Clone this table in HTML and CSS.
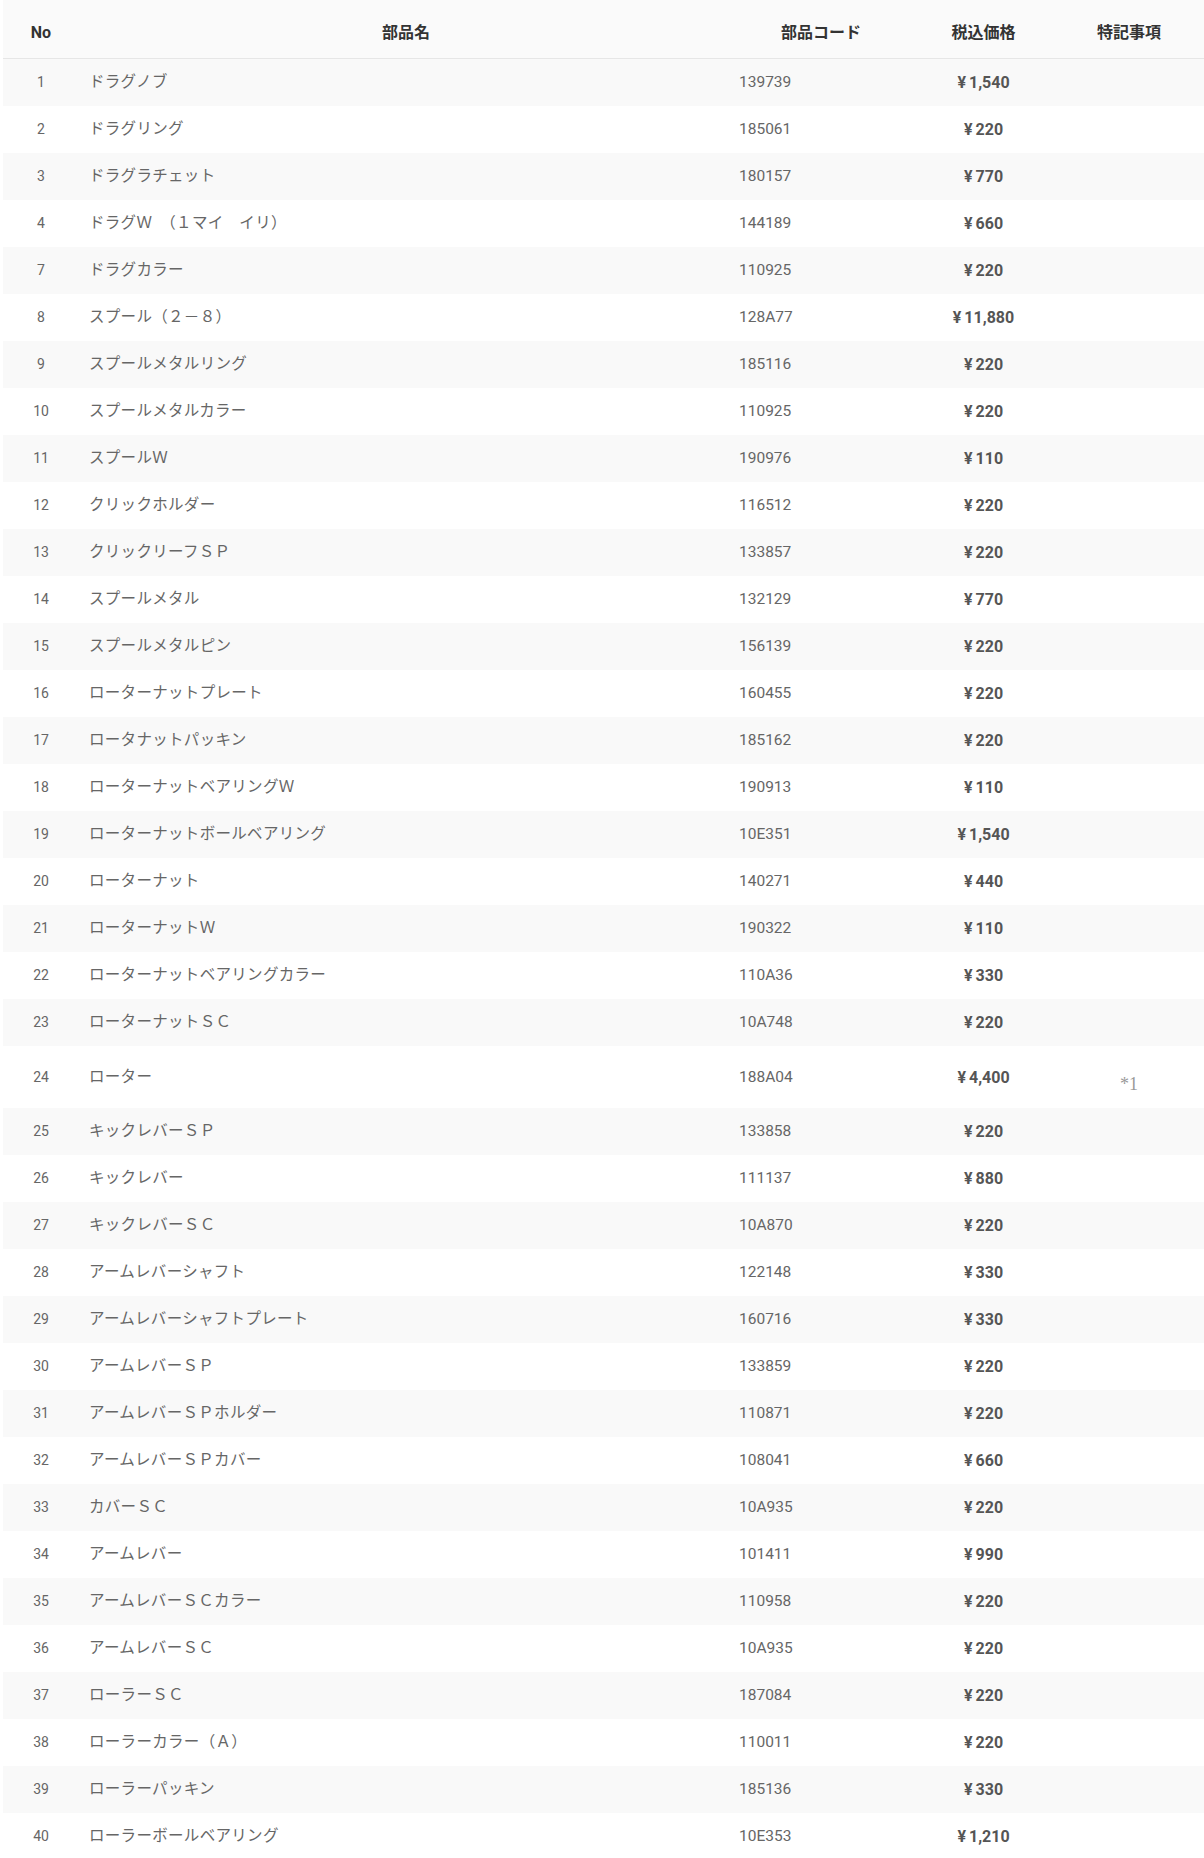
FILE: index.html
```html
<!DOCTYPE html>
<html lang="ja">
<head>
    <meta charset="UTF-8">
    <meta name="viewport" content="width=device-width, initial-scale=1.0">
    <title>部品一覧</title>
    <link rel="stylesheet" href="styles.css">
</head>
<body>
    <div class="parts-wrap">
        <table class="parts-table">
            <colgroup>
                <col class="col-no">
                <col class="col-name">
                <col class="col-code">
                <col class="col-price">
                <col class="col-note">
            </colgroup>
            <thead>
                <tr>
                    <th>No</th>
                    <th class="th-name">部品名</th>
                    <th>部品コード</th>
                    <th>税込価格</th>
                    <th>特記事項</th>
                </tr>
            </thead>
            <tbody>
                <tr><td class="no">1</td><td class="name">ドラグノブ</td><td class="code">139739</td><td class="price"><span class="yen">¥</span>1,540</td><td class="note"></td></tr>
                <tr><td class="no">2</td><td class="name">ドラグリング</td><td class="code">185061</td><td class="price"><span class="yen">¥</span>220</td><td class="note"></td></tr>
                <tr><td class="no">3</td><td class="name">ドラグラチェット</td><td class="code">180157</td><td class="price"><span class="yen">¥</span>770</td><td class="note"></td></tr>
                <tr><td class="no">4</td><td class="name">ドラグＷ　（１マイ　イリ）</td><td class="code">144189</td><td class="price"><span class="yen">¥</span>660</td><td class="note"></td></tr>
                <tr><td class="no">7</td><td class="name">ドラグカラー</td><td class="code">110925</td><td class="price"><span class="yen">¥</span>220</td><td class="note"></td></tr>
                <tr><td class="no">8</td><td class="name">スプール（２－８）</td><td class="code">128A77</td><td class="price"><span class="yen">¥</span>11,880</td><td class="note"></td></tr>
                <tr><td class="no">9</td><td class="name">スプールメタルリング</td><td class="code">185116</td><td class="price"><span class="yen">¥</span>220</td><td class="note"></td></tr>
                <tr><td class="no">10</td><td class="name">スプールメタルカラー</td><td class="code">110925</td><td class="price"><span class="yen">¥</span>220</td><td class="note"></td></tr>
                <tr><td class="no">11</td><td class="name">スプールＷ</td><td class="code">190976</td><td class="price"><span class="yen">¥</span>110</td><td class="note"></td></tr>
                <tr><td class="no">12</td><td class="name">クリックホルダー</td><td class="code">116512</td><td class="price"><span class="yen">¥</span>220</td><td class="note"></td></tr>
                <tr><td class="no">13</td><td class="name">クリックリーフＳＰ</td><td class="code">133857</td><td class="price"><span class="yen">¥</span>220</td><td class="note"></td></tr>
                <tr><td class="no">14</td><td class="name">スプールメタル</td><td class="code">132129</td><td class="price"><span class="yen">¥</span>770</td><td class="note"></td></tr>
                <tr><td class="no">15</td><td class="name">スプールメタルピン</td><td class="code">156139</td><td class="price"><span class="yen">¥</span>220</td><td class="note"></td></tr>
                <tr><td class="no">16</td><td class="name">ローターナットプレート</td><td class="code">160455</td><td class="price"><span class="yen">¥</span>220</td><td class="note"></td></tr>
                <tr><td class="no">17</td><td class="name">ロータナットパッキン</td><td class="code">185162</td><td class="price"><span class="yen">¥</span>220</td><td class="note"></td></tr>
                <tr><td class="no">18</td><td class="name">ローターナットベアリングＷ</td><td class="code">190913</td><td class="price"><span class="yen">¥</span>110</td><td class="note"></td></tr>
                <tr><td class="no">19</td><td class="name">ローターナットボールベアリング</td><td class="code">10E351</td><td class="price"><span class="yen">¥</span>1,540</td><td class="note"></td></tr>
                <tr><td class="no">20</td><td class="name">ローターナット</td><td class="code">140271</td><td class="price"><span class="yen">¥</span>440</td><td class="note"></td></tr>
                <tr><td class="no">21</td><td class="name">ローターナットＷ</td><td class="code">190322</td><td class="price"><span class="yen">¥</span>110</td><td class="note"></td></tr>
                <tr><td class="no">22</td><td class="name">ローターナットベアリングカラー</td><td class="code">110A36</td><td class="price"><span class="yen">¥</span>330</td><td class="note"></td></tr>
                <tr><td class="no">23</td><td class="name">ローターナットＳＣ</td><td class="code">10A748</td><td class="price"><span class="yen">¥</span>220</td><td class="note"></td></tr>
                <tr><td class="no">24</td><td class="name">ローター</td><td class="code">188A04</td><td class="price"><span class="yen">¥</span>4,400</td><td class="note"><p class="note-mark">*1</p></td></tr>
                <tr><td class="no">25</td><td class="name">キックレバーＳＰ</td><td class="code">133858</td><td class="price"><span class="yen">¥</span>220</td><td class="note"></td></tr>
                <tr><td class="no">26</td><td class="name">キックレバー</td><td class="code">111137</td><td class="price"><span class="yen">¥</span>880</td><td class="note"></td></tr>
                <tr><td class="no">27</td><td class="name">キックレバーＳＣ</td><td class="code">10A870</td><td class="price"><span class="yen">¥</span>220</td><td class="note"></td></tr>
                <tr><td class="no">28</td><td class="name">アームレバーシャフト</td><td class="code">122148</td><td class="price"><span class="yen">¥</span>330</td><td class="note"></td></tr>
                <tr><td class="no">29</td><td class="name">アームレバーシャフトプレート</td><td class="code">160716</td><td class="price"><span class="yen">¥</span>330</td><td class="note"></td></tr>
                <tr><td class="no">30</td><td class="name">アームレバーＳＰ</td><td class="code">133859</td><td class="price"><span class="yen">¥</span>220</td><td class="note"></td></tr>
                <tr><td class="no">31</td><td class="name">アームレバーＳＰホルダー</td><td class="code">110871</td><td class="price"><span class="yen">¥</span>220</td><td class="note"></td></tr>
                <tr><td class="no">32</td><td class="name">アームレバーＳＰカバー</td><td class="code">108041</td><td class="price"><span class="yen">¥</span>660</td><td class="note"></td></tr>
                <tr><td class="no">33</td><td class="name">カバーＳＣ</td><td class="code">10A935</td><td class="price"><span class="yen">¥</span>220</td><td class="note"></td></tr>
                <tr><td class="no">34</td><td class="name">アームレバー</td><td class="code">101411</td><td class="price"><span class="yen">¥</span>990</td><td class="note"></td></tr>
                <tr><td class="no">35</td><td class="name">アームレバーＳＣカラー</td><td class="code">110958</td><td class="price"><span class="yen">¥</span>220</td><td class="note"></td></tr>
                <tr><td class="no">36</td><td class="name">アームレバーＳＣ</td><td class="code">10A935</td><td class="price"><span class="yen">¥</span>220</td><td class="note"></td></tr>
                <tr><td class="no">37</td><td class="name">ローラーＳＣ</td><td class="code">187084</td><td class="price"><span class="yen">¥</span>220</td><td class="note"></td></tr>
                <tr><td class="no">38</td><td class="name">ローラーカラー（Ａ）</td><td class="code">110011</td><td class="price"><span class="yen">¥</span>220</td><td class="note"></td></tr>
                <tr><td class="no">39</td><td class="name">ローラーパッキン</td><td class="code">185136</td><td class="price"><span class="yen">¥</span>330</td><td class="note"></td></tr>
                <tr><td class="no">40</td><td class="name">ローラーボールベアリング</td><td class="code">10E353</td><td class="price"><span class="yen">¥</span>1,210</td><td class="note"></td></tr>
            </tbody>
        </table>
    </div>
</body>
</html>
```

FILE: styles.css
```css
/* リセット */
* {
    margin: 0;
    padding: 0;
    box-sizing: border-box;
}

body {
    background: #ffffff;
    font-family: Roboto, "Noto Sans CJK JP", sans-serif;
    color: #666666;
}

/* テーブルの外枠 */
.parts-wrap {
    padding-left: 3px;
}

.parts-table {
    width: 100%;
    border-collapse: collapse;
    table-layout: fixed;
}

/* 列幅 */
.col-no { width: 76px; }
.col-name { width: 650px; }
.col-code { width: 184px; }
.col-price { width: 141px; }
.col-note { width: 150px; }

/* 見出し行 */
.parts-table thead tr {
    background: #fafafa;
    border-bottom: 1px solid #e6e6e6;
}

.parts-table th {
    padding: 21px 10px 13px;
    font-size: 16px;
    line-height: 24px;
    font-weight: bold;
    color: #333333;
    text-align: center;
}

.parts-table th.th-name {
    padding-left: 14px;
    padding-right: 10px;
}

/* 本体の行 */
.parts-table tbody tr:nth-child(odd) {
    background: #f9f9f9;
}

.parts-table td {
    padding: 12px 10px;
    font-size: 15px;
    line-height: 23px;
    vertical-align: middle;
}

.parts-table td.no {
    text-align: center;
    font-size: 14px;
}

.parts-table td.name {
    font-size: 15.5px;
    letter-spacing: 0.02em;
}

.parts-table td.code {
    font-size: 15.5px;
}

.parts-table td.price {
    text-align: center;
    font-weight: bold;
    font-size: 16px;
    color: #555555;
}

.parts-table td.price .yen {
    margin-right: 3px;
}

.parts-table td.note {
    text-align: center;
}

/* 特記事項の注記 */
.note-mark {
    padding-top: 15px;
    font-family: "Liberation Serif", serif;
    font-size: 18px;
    color: #999999;
}
```
